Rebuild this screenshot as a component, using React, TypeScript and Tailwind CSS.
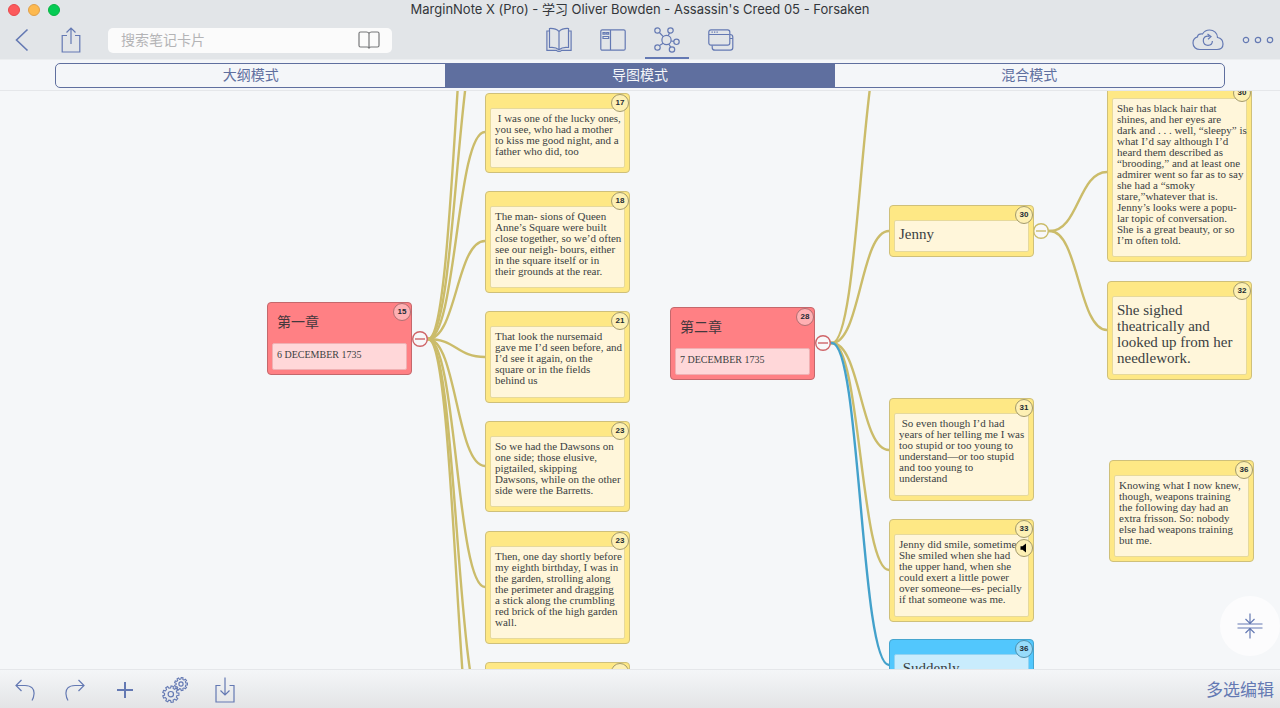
import React from "react";

type Tone = "yellow" | "red" | "blue";

interface CardData {
  id: string;
  x: number;
  y: number;
  height: number;
  page?: number;
  text: string;
  tone?: Tone;
  title?: string;
  large?: boolean;
  audio?: boolean;
}

interface Point {
  x: number;
  y: number;
}

const CARDS: CardData[] = [
  { id: "c15", x: 267, y: 211, height: 73, page: 15, tone: "red", title: "第一章", text: "6 DECEMBER 1735" },
  { id: "c17", x: 485, y: 2, height: 80, page: 17, text: " I was one of the lucky ones,\nyou see, who had a mother\nto kiss me good night, and a\nfather who did, too" },
  { id: "c18", x: 485, y: 100, height: 102, page: 18, text: "The man- sions of Queen\nAnne’s Square were built\nclose together, so we’d often\nsee our neigh- bours, either\nin the square itself or in\ntheir grounds at the rear." },
  { id: "c21", x: 485, y: 220, height: 92, page: 21, text: "That look the nursemaid\ngave me I’d seen before, and\nI’d see it again, on the\nsquare or in the fields\nbehind us" },
  { id: "c23a", x: 485, y: 330, height: 91, page: 23, text: "So we had the Dawsons on\none side; those elusive,\npigtailed, skipping\nDawsons, while on the other\nside were the Barretts." },
  { id: "c23b", x: 485, y: 440, height: 113, page: 23, text: "Then, one day shortly before\nmy eighth birthday, I was in\nthe garden, strolling along\nthe perimeter and dragging\na stick along the crumbling\nred brick of the high garden\nwall." },
  { id: "next", x: 485, y: 571, height: 102, text: "" },
  { id: "c28", x: 670, y: 216, height: 73, page: 28, tone: "red", title: "第二章", text: "7 DECEMBER 1735" },
  { id: "c30", x: 889, y: 114, height: 52, page: 30, text: "Jenny", large: true },
  { id: "c31", x: 889, y: 307, height: 103, page: 31, text: " So even though I’d had\nyears of her telling me I was\ntoo stupid or too young to\nunderstand—or too stupid\nand too young to\nunderstand" },
  { id: "c33", x: 889, y: 428, height: 103, page: 33, audio: true, text: "Jenny did smile, sometimes.\nShe smiled when she had\nthe upper hand, when she\ncould exert a little power\nover someone—es- pecially\nif that someone was me." },
  { id: "c36b", x: 889, y: 548, height: 52, page: 36, tone: "blue", text: " Suddenly", large: true },
  { id: "c30b", x: 1107, y: -8, height: 179, page: 30, text: "She has black hair that\nshines, and her eyes are\ndark and . . . well, “sleepy” is\nwhat I’d say although I’d\nheard them described as\n“brooding,” and at least one\nadmirer went so far as to say\nshe had a “smoky\nstare,”whatever that is.\nJenny’s looks were a popu-\nlar topic of conversation.\nShe is a great beauty, or so\nI’m often told." },
  { id: "c32", x: 1107, y: 190, height: 99, page: 32, large: true, text: "She sighed\ntheatrically and\nlooked up from her\nneedlework." },
  { id: "c36", x: 1109, y: 369, height: 102, page: 36, text: "Knowing what I now knew,\nthough, weapons training\nthe following day had an\nextra frisson. So: nobody\nelse had weapons training\nbut me." },
];

const FIRST: Point = { x: 428, y: 248 };
const SECOND: Point = { x: 832, y: 252 };
const JENNY: Point = { x: 1050, y: 140 };

const LINKS: { from: Point; to: Point; color: string }[] = [
  ...[-214, -74, 41, 150, 266, 375, 496, 624, 726].map((y) => ({ from: FIRST, to: { x: 485, y }, color: "#cbbc6a" })),
  ...[-69, 140, 359, 479].map((y) => ({ from: SECOND, to: { x: 889, y }, color: "#cbbc6a" })),
  { from: SECOND, to: { x: 889, y: 574 }, color: "#43a1cb" },
  ...[81, 239].map((y) => ({ from: JENNY, to: { x: 1107, y }, color: "#cbbc6a" })),
];

const curve = (a: Point, b: Point) => {
  const mid = (a.x + b.x) / 2;
  return `M${a.x - 5} ${a.y}H${a.x}C${mid} ${a.y} ${mid} ${b.y} ${b.x} ${b.y}`;
};

const gear = (cx: number, cy: number, outer: number, inner: number, teeth: number) => {
  const step = (Math.PI * 2) / teeth;
  const pts: string[] = [];
  for (let i = 0; i < teeth; i++) {
    [
      [-0.3, inner],
      [-0.2, outer],
      [0.2, outer],
      [0.3, inner],
    ].forEach(([k, r]) => {
      const a = (i + k) * step;
      pts.push(`${(cx + Math.cos(a) * r).toFixed(2)} ${(cy + Math.sin(a) * r).toFixed(2)}`);
    });
  }
  return `M${pts.join("L")}Z`;
};

const TONES: Record<Tone, { card: string; body: string; badge: string }> = {
  yellow: { card: "bg-[#fee885] border-[#cfc07a]", body: "bg-[#fff6da] border-[#e6d99c]", badge: "bg-[#fdf0b4] border-[#a39a6b]" },
  red: { card: "bg-[#ff8084] border-[#c4686c]", body: "bg-[#ffd7d9] border-[#f0b0b3]", badge: "bg-[#ffb0b3] border-[#b06f72]" },
  blue: { card: "bg-[#52c7fd] border-[#45a5cf]", body: "bg-[#c9ecfd] border-[#92d3f2]", badge: "bg-[#97dbfa] border-[#4c8fae]" },
};

const textSize = (card: CardData) => {
  if (card.large) return "pt-[5px] text-[15px] leading-[16px]";
  if (card.title) return "pt-[5px] text-[10px] leading-[11px]";
  return "pt-1 text-[11px] leading-[11px]";
};

function Card({ card }: { card: CardData }) {
  const tone = TONES[card.tone ?? "yellow"];
  return (
    <article
      className={`absolute flex w-[145px] flex-col rounded-[4px] border px-1 pb-1 ${tone.card}`}
      style={{ left: card.x, top: card.y, height: card.height }}
    >
      {card.title ? (
        <h2 className="h-10 shrink-0 pt-2 pl-[5px] font-['Liberation_Sans','Noto_Sans_CJK_SC',sans-serif] text-[14px] leading-[22px] text-[#43383d]">
          {card.title}
        </h2>
      ) : (
        <div className="h-[14px] shrink-0" />
      )}
      <p
        className={`min-h-0 flex-1 rounded-[2px] border pl-1 font-['Liberation_Serif',serif] whitespace-pre text-[#3b3f42] ${textSize(card)} ${tone.body}`}
      >
        {card.text}
      </p>
      <span
        className={`absolute top-0 right-0 flex size-[18px] items-center justify-center rounded-full border font-['Liberation_Sans',sans-serif] text-[8px] font-bold text-[#222b33] ${tone.badge}`}
      >
        {card.page}
      </span>
      {card.audio && (
        <button
          aria-label="播放录音"
          className={`absolute top-[19px] right-0 flex size-[18px] items-center justify-center rounded-full border ${tone.badge}`}
        >
          <svg viewBox="0 0 10 10" className="size-[10px]" fill="#000">
            <path d="M1.500 3.200H3.500L7 .5V9.500L3.500 6.800H1.500Z" />
          </svg>
        </button>
      )}
    </article>
  );
}

function Collapse({ x, y, color }: { x: number; y: number; color: string }) {
  return (
    <button aria-label="折叠" className="absolute size-4" style={{ left: x - 8, top: y - 8 }}>
      <svg viewBox="0 0 16 16" className="size-4" fill="#f8f8fa" stroke={color} strokeWidth="1.4">
        <circle cx="8" cy="8" r="7.3" />
        <path d="M3 8h10" />
      </svg>
    </button>
  );
}

function Icon({ w, h, children, className = "" }: { w: number; h: number; children: React.ReactNode; className?: string }) {
  return (
    <svg width={w} height={h} viewBox={`0 0 ${w} ${h}`} fill="none" stroke="currentColor" strokeWidth="1.2" className={className}>
      {children}
    </svg>
  );
}

const MODES = [
  {
    label: "阅读",
    icon: (
      <Icon w={26} h={26}>
        <path d="M13 4.500C10.500 2 7 1.300 3.500 1.500V20.500C7 20 10.500 20.500 13 22.800C15.500 20.500 19 20 22.500 20.500V1.500C19 1.300 15.500 2 13 4.500V22.800" />
        <path d="M3.500 4H.9V23.300H10.500C11.500 24.800 14.500 24.800 15.500 23.300H25.100V4H22.500" />
      </Icon>
    ),
  },
  {
    label: "分栏",
    icon: (
      <Icon w={26} h={22}>
        <rect x=".8" y=".8" width="24.400" height="20.400" rx="1.500" />
        <path d="M10.500 1V21" />
        <path d="M3 3.500H5.200V5.200H3ZM6.700 3.500H8.700V5.200H6.700ZM3 7.500H8.700V9.500H3Z" />
      </Icon>
    ),
  },
  {
    label: "脑图",
    icon: (
      <Icon w={26} h={26}>
        <circle cx="12.500" cy="13" r="4.600" />
        <circle cx="3.500" cy="3.500" r="2.700" />
        <circle cx="16.500" cy="3.500" r="2.700" />
        <circle cx="22.500" cy="14.800" r="2.700" />
        <circle cx="18" cy="22.500" r="2.700" />
        <circle cx="3.500" cy="20.500" r="2.700" />
        <path d="M5.400 5.500L9.300 9.600M15.500 6L14.200 8.700M17 14L19.800 14.400M14.800 17L16.700 20.100M5.500 18.600L9.200 16.200" />
      </Icon>
    ),
  },
  {
    label: "卡片",
    icon: (
      <Icon w={26} h={22}>
        <rect x=".8" y=".8" width="21" height="15.400" rx="2.200" />
        <path d="M1 5.500H21.600M3.500 3.200H4.800M6 3.200H7.300M8.500 3.200H9.800" />
        <path d="M22 5.500C24 5.500 24.800 6.300 24.800 8V18.500C24.800 20.300 24 21.200 22.200 21.200H7C5 21.200 4.200 20.300 4.200 18.500V16.500M22 9.500H24.800" />
      </Icon>
    ),
  },
];

const TOOLS = [
  {
    label: "撤销",
    icon: (
      <Icon w={20} h={22}>
        <path d="M6.500 1L1 6.500L6.500 12M1 6.500H10C16.500 6.500 19.500 10 19 15C18.800 18 18 20 17 21.500" />
      </Icon>
    ),
  },
  {
    label: "重做",
    icon: (
      <Icon w={20} h={22}>
        <path d="M13.500 1L19 6.500L13.500 12M19 6.500H10C3.500 6.500 .5 10 1 15C1.200 18 2 20 3 21.500" />
      </Icon>
    ),
  },
  {
    label: "添加",
    icon: (
      <Icon w={16} h={16}>
        <path d="M8 0V16M0 8H16" strokeWidth="2" />
      </Icon>
    ),
  },
  {
    label: "设置",
    icon: (
      <Icon w={26} h={26}>
        <path d={gear(8.8, 17.2, 8.2, 6.3, 9)} strokeWidth="1.1" />
        <circle cx="8.800" cy="17.200" r="2.700" />
        <path d={gear(19, 7, 6.5, 4.9, 9)} strokeWidth="1.1" />
        <circle cx="19" cy="7" r="2.100" />
      </Icon>
    ),
  },
  {
    label: "导入",
    icon: (
      <Icon w={20} h={26}>
        <path d="M5.500 8.500H1V25H19V8.500H14.500M10 .5V18M5.500 13.500L10 18L14.500 13.500" />
      </Icon>
    ),
  },
];

export default function App() {
  return (
    <div className="flex h-screen flex-col overflow-hidden bg-[#f5f7f9] font-['Inter','Noto_Sans_CJK_SC',sans-serif] text-[#6479b3]">
      <header className="shrink-0 border-b border-[#eceef0] bg-[#e2e5e8]">
        <div className="grid h-[19px] grid-cols-[1fr_auto_1fr] items-center">
          <div className="flex gap-2 pl-2">
            <button aria-label="关闭" className="size-3 rounded-full border border-[#e8494c] bg-[#fc5a5c]" />
            <button aria-label="最小化" className="size-3 rounded-full border border-[#e0a04a] bg-[#fdb94f]" />
            <button aria-label="缩放" className="size-3 rounded-full border border-[#09b443] bg-[#05cb54]" />
          </div>
          <h1 className="text-[13px] leading-[17px] text-[#33363a]">
            MarginNote X (Pro) - 学习 Oliver Bowden - Assassin's Creed 05 - Forsaken
          </h1>
        </div>
        <div className="grid h-10 grid-cols-[1fr_auto_1fr] items-stretch">
          <div className="flex items-center pt-[2px] pl-[15px]">
            <button aria-label="返回">
              <Icon w={14} h={24}>
                <path d="M12.500 1.500L1.500 12L12.500 22.500" strokeWidth="1.600" />
              </Icon>
            </button>
            <button aria-label="分享" className="ml-8">
              <Icon w={20} h={26}>
                <path d="M6 8.500H1.200V25H18.800V8.500H14M10 17V1M5.500 5.500L10 1L14.500 5.500" />
              </Icon>
            </button>
            <label className="ml-[27px] flex h-[25px] w-[284px] items-center rounded-[5px] bg-[#fbfbfb] pr-3 pl-[13px]">
              <input
                type="text"
                aria-label="搜索笔记卡片"
                placeholder="搜索笔记卡片"
                className="min-w-0 flex-1 bg-transparent text-[14px] leading-5 text-[#444] outline-none placeholder:text-[#b4b4b6]"
              />
              <Icon w={22} h={18} className="text-[#77787a]">
                <path d="M11 2.500C10.500 1.200 10 1 8.500 1H2.500C1.500 1 1 1.500 1 2.500V14.500C1 15.500 1.500 16 2.500 16H9C10 16 10.700 16.300 11 17C11.300 16.300 12 16 13 16H19.500C20.500 16 21 15.500 21 14.500V2.500C21 1.500 20.500 1 19.500 1H13.500C12 1 11.500 1.200 11 2.500V17" />
              </Icon>
            </label>
          </div>
          <nav className="flex gap-[10px]">
            {MODES.map((m, i) => (
              <button
                key={m.label}
                aria-label={m.label}
                className={`flex w-11 items-center justify-center border-b-2 pt-1 ${i === 2 ? "border-[#6479b3]" : "border-transparent"}`}
              >
                {m.icon}
              </button>
            ))}
          </nav>
          <div className="flex items-center justify-end gap-[18px] pt-[2px] pr-[6px]">
            <button aria-label="同步">
              <Icon w={32} h={22}>
                <path d="M8 20.500C4 20.500 1 18 1 14C1 10.500 3 8.500 5.500 7.800C5.500 5.500 8 4.500 10.500 5C12 2.500 14.500 1 17.500 1C22 1 25.500 4.300 25.500 8.500C28.500 9 31 11.500 31 15C31 18.500 28.500 20.500 25 20.500Z" />
                <path d="M17.500 7.300C13.500 6.200 11 8.800 11.300 12C11.600 14.800 13.500 16.300 16 16.300C18.500 16.300 20.300 14.500 20.400 12M15.500 5L19 7.600L16 10.200" />
              </Icon>
            </button>
            <button aria-label="更多">
              <Icon w={32} h={8}>
                <circle cx="4" cy="4" r="2.700" />
                <circle cx="16" cy="4" r="2.700" />
                <circle cx="28" cy="4" r="2.700" />
              </Icon>
            </button>
          </div>
        </div>
      </header>

      <div className="shrink-0 border-b border-[#e5e7ea] bg-[#f4f6f9] px-[55px] pt-[3px] pb-[2px]">
        <div className="grid h-[25px] grid-cols-3 overflow-hidden rounded-[5px] border border-[#5f6f9f] text-[14px] leading-5 text-[#5f6f9f]">
          <button className="pb-[2px]">大纲模式</button>
          <button className="bg-[#5f6f9f] pb-[2px] text-[#f4f6f9]">导图模式</button>
          <button className="pb-[2px]">混合模式</button>
        </div>
      </div>

      <main className="relative min-h-0 flex-1 overflow-hidden">
        <svg className="absolute inset-0 size-full" fill="none" strokeWidth="2.400">
          {LINKS.map((l, i) => (
            <path key={i} d={curve(l.from, l.to)} stroke={l.color} />
          ))}
        </svg>
        {CARDS.map((c) => (
          <Card key={c.id} card={c} />
        ))}
        <Collapse x={420} y={248} color="#cf6468" />
        <Collapse x={823} y={252} color="#cf6468" />
        <Collapse x={1041} y={140} color="#cbbc6a" />
        <button
          aria-label="收起"
          className="absolute right-0 bottom-[13px] flex size-[60px] items-center justify-center rounded-full bg-[#fcfcfd]"
        >
          <Icon w={26} h={26}>
            <path d="M.5 11H25.500M.5 15H25.500M13 .5V10.500M8.500 6L13 10.500L17.500 6M13 25.500V15.500M8.500 20L13 15.500L17.500 20" />
          </Icon>
        </button>
      </main>

      <footer className="flex h-[39px] shrink-0 items-center justify-between border-t border-[#e5e7ea] bg-linear-to-b from-[#f4f6f8] to-[#e3e4e6] pt-[2px] pr-[6px]">
        <div className="flex">
          {TOOLS.map((t) => (
            <button key={t.label} aria-label={t.label} className="flex h-[30px] w-[50px] items-center justify-center">
              {t.icon}
            </button>
          ))}
        </div>
        <button className="text-[17px] leading-6">多选编辑</button>
      </footer>
    </div>
  );
}
